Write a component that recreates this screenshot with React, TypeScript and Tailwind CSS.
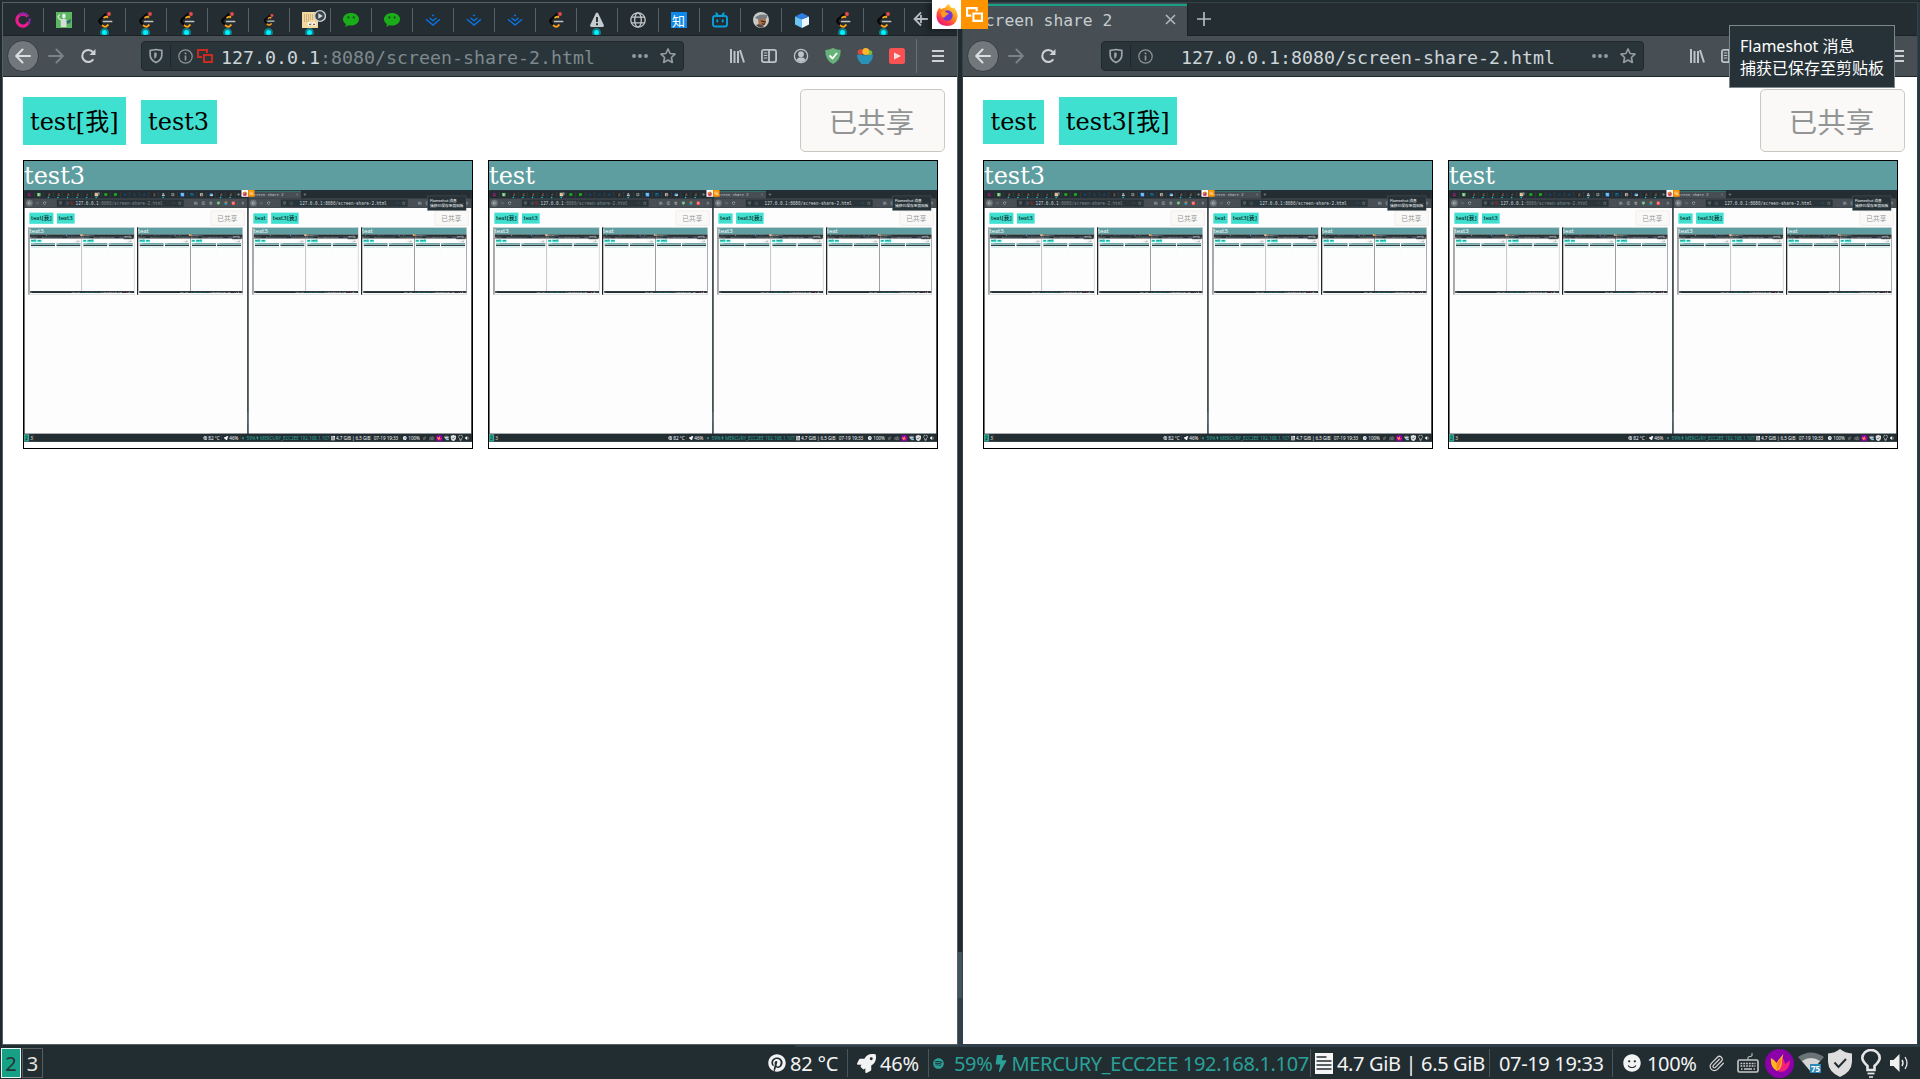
import React from "react";
import { FaPinterest, FaRocket, FaSpotify, FaBolt, FaSmile } from "react-icons/fa";
import { Paperclip } from "lucide-react";

const MONO = "font-['DejaVu_Sans_Mono',monospace]";
const SERIF = "font-['DejaVu_Serif','Noto_Sans_CJK_SC',serif]";
const SANS = "font-['Noto_Sans','Noto_Sans_CJK_SC',sans-serif]";

type TabKind =
  | "swirl" | "robot" | "leet" | "leetSmall" | "page" | "wechat" | "juejin" | "warn"
  | "globe" | "zhihu" | "bili" | "avatar" | "cube";

const tabs: { kind: TabKind; dot?: boolean }[] = [
  { kind: "swirl" }, { kind: "robot" },
  { kind: "leet", dot: true }, { kind: "leet", dot: true }, { kind: "leet", dot: true }, { kind: "leet", dot: true },
  { kind: "leetSmall", dot: true }, { kind: "page", dot: true },
  { kind: "wechat" }, { kind: "wechat" },
  { kind: "juejin" }, { kind: "juejin" }, { kind: "juejin" },
  { kind: "leet" }, { kind: "warn", dot: true }, { kind: "globe" }, { kind: "zhihu" }, { kind: "bili" },
  { kind: "avatar" }, { kind: "cube" }, { kind: "leet", dot: true }, { kind: "leet", dot: true },
];

function Leet({ size = 16 }: { size?: number }) {
  return (
    <svg width={size} height={size} viewBox="0 0 16 16" fill="none" strokeWidth="2.2">
      <path d="M8.6 2.4 2.8 7.600Q1.400 9 2.800 10.400L5.400 13" stroke="#070707" strokeLinecap="round" />
      <path d="M6.500 6 8.600 4.800q1.200-.4 2.400.8" stroke="#ffa116" strokeWidth="1.900" />
      <path d="M4.900 13 7 14.500q1.600.8 3-.6L11.400 12.500" stroke="#ffa116" strokeWidth="1.900" />
      <path d="M6.600 9.500h8" stroke="#c4c4c4" strokeLinecap="round" strokeWidth="1.700" />
      <circle cx="12" cy="2" r="1.900" fill="#e94b4b" />
    </svg>
  );
}

function TabIcon({ kind }: { kind: TabKind }) {
  switch (kind) {
    case "swirl":
      return (
        <svg width="16" height="16" viewBox="0 0 16 16" fill="none">
          <path d="M12.800 4.600A6 6 0 1 0 13.600 10" stroke="#e91e8c" strokeWidth="3.200" />
          <path d="M4 3.400Q9-1 13 4.500M14.600 6.500q.6 3-1.400 5.500" stroke="#8e24aa" strokeWidth="2" />
          <path d="M2 10q3 6 9.500 3.600" stroke="#f0189a" strokeWidth="1.600" />
        </svg>
      );
    case "robot":
      return (
        <svg width="16" height="16" viewBox="0 0 16 16">
          <rect width="16" height="16" fill="#5cb860" />
          <path d="M1.200 4.500 3.500 2l.7 1-1.500 2 2.300 2.200 3-.4 2.500.7V15H4.800V8.800L2.500 7Z" fill="#d5ded6" />
          <ellipse cx="7.900" cy="3.900" rx="1.800" ry="2.500" fill="#e9eeea" />
          <path d="m10.500 9 4.500-2-.8 4-3 1Z" fill="#2e6b72" />
        </svg>
      );
    case "leet":
      return <Leet />;
    case "leetSmall":
      return <Leet size={12} />;
    case "page":
      return (
        <svg width="24" height="20" viewBox="0 0 24 20" className="mb-1 ml-2">
          <rect x="0" y="4" width="16" height="16" fill="#f3d9a0" />
          <path d="M2 7h9M2 9h9M2 11h9M2 13h6" stroke="#a68a5a" strokeDasharray="1 1" />
          <circle cx="7.500" cy="16" r="1.900" fill="#fff" /><circle cx="12" cy="16" r="1.900" fill="#fff" />
          <circle cx="8" cy="16.400" r=".8" fill="#333" /><circle cx="12" cy="16.400" r=".8" fill="#333" />
          <circle cx="18" cy="8" r="5.400" fill="#3a444a" stroke="#c9ced1" strokeWidth="1.400" />
          <path d="m16.300 5.200 4.500 2.800-4.500 2.800Z" fill="#d5d9db" />
        </svg>
      );
    case "wechat":
      return (
        <svg width="16" height="16" viewBox="0 0 16 16">
          <path d="M8 1C3.500 1 0 3.700 0 7.200c0 2 1.100 3.700 3 4.900L2.200 15l3.200-1.800c.8.2 1.700.3 2.600.3 4.500 0 8-2.800 8-6.300S12.500 1 8 1Z" fill="#1aad19" />
          <circle cx="5.400" cy="5.400" r="1.100" fill="#14501a" /><circle cx="10.700" cy="5.400" r="1.100" fill="#14501a" />
        </svg>
      );
    case "juejin":
      return (
        <svg width="16" height="16" viewBox="0 0 16 16" fill="none" stroke="#0a75e8" strokeWidth="1.400">
          <path d="m1 7.200 7 5.800 7-5.800M4.500 6 8 8.700 11.500 6" />
          <path d="m8 2.200 1.400 1.200L8 4.600 6.600 3.400Z" fill="#0a75e8" stroke="none" />
        </svg>
      );
    case "warn":
      return (
        <svg width="16" height="16" viewBox="0 0 16 16">
          <path d="M6.700 1.500q1.300-1.800 2.600 0l5.400 11.300q.6 2-1.300 2.200H2.600Q.7 14.800 1.300 12.800Z" fill="#c6cbce" />
          <path d="M8 5v5M8 11.300v1.900" stroke="#232d32" strokeWidth="1.900" />
        </svg>
      );
    case "globe":
      return (
        <svg width="16" height="16" viewBox="0 0 16 16" fill="none" stroke="#c3c8ca" strokeWidth="1.300">
          <circle cx="8" cy="8" r="7.200" /><ellipse cx="8" cy="8" rx="3.300" ry="7.200" /><path d="M1.500 5.200h13M1.500 10.800h13" />
        </svg>
      );
    case "zhihu":
      return <span className="flex h-4 w-4 items-center justify-center bg-[#0f88eb] text-[13px] leading-none text-white font-['Noto_Sans_CJK_SC',sans-serif]">知</span>;
    case "bili":
      return (
        <svg width="16" height="16" viewBox="0 0 16 16" fill="none" stroke="#0a9fdc" strokeWidth="1.900" strokeLinecap="round">
          <rect x="1" y="4" width="14" height="10.500" rx="2" /><path d="M4.300 1.300 6 3.300M11.700 1.300 10 3.300M5.300 8.300v1.200M10.700 8.300v1.200" />
        </svg>
      );
    case "avatar":
      return (
        <svg width="16" height="16" viewBox="0 0 16 16">
          <circle cx="8" cy="8" r="8" fill="#c9c9c6" />
          <path d="M5 6h8l-.5 6L9 15.500 5.500 13Z" fill="#a9714a" />
          <path d="M2 6q4-5 12-3v3L6 7.500Z" fill="#777d82" /><path d="m8 9 5 1M9 12h3" stroke="#2c1c14" />
          <path d="M3 13q5-2 8 2.300Q6 17 3 13Z" fill="#4b4a48" />
        </svg>
      );
    case "cube":
      return (
        <svg width="16" height="16" viewBox="0 0 16 16">
          <path d="m1 4.500 7 2.800V16l-7-3.600Z" fill="#6cc4f5" /><path d="m15 4.500-7 2.800V16l7-3.600Z" fill="#e9f6ff" /><path d="m8 1 7 3.500-7 2.800-7-2.800Z" fill="#2d7ee0" />
        </svg>
      );
  }
}

function ShareGlyph({ color, size }: { color: string; size: number }) {
  return (
    <svg width={size} height={size} viewBox="0 0 16 14" fill="none" stroke={color} strokeWidth="2">
      <path d="M5 8H1V1h9v3" /><path d="M7 6h8v7H7Z" />
    </svg>
  );
}

function PinnedTabs() {
  return (
    <div className="flex h-full">
      {tabs.map((t, i) => (
        <div key={i} className="relative flex h-[32px] w-[41px] shrink-0 items-center justify-center pr-[2px] pt-[2px]">
          <TabIcon kind={t.kind} />
          {t.dot && (
            <span className="absolute bottom-0 left-[15px] h-[7px] w-[9px] overflow-hidden">
              <span className="block h-[9px] w-[9px] rounded-full border-2 border-[#127f86] bg-[#00f0ff]" />
            </span>
          )}
          <span className="absolute right-0 top-[5px] h-6 w-px bg-[#566065]" />
        </div>
      ))}
      <svg width="16" height="16" viewBox="0 0 16 16" className="ml-[8px] mt-2" fill="none" stroke="#b6bdc0" strokeWidth="1.800">
        <path d="M15 8H2M8 1.500 1.500 8 8 14.500M8 4v8" />
      </svg>
    </div>
  );
}

function ActiveTab() {
  return (
    <div className="flex h-full">
      <div className="relative flex h-[33px] w-[225px] items-center border-r border-[#1a2226] bg-[#474f55] pl-3">
        <span className="absolute inset-x-0 top-[1px] h-[2px] bg-[#16a085]" />
        <span className={`${MONO} w-[187px] whitespace-pre pt-[3px] text-[16.300px] leading-5 text-[#c6cdd0]`}>Screen share 2</span>
        <svg width="11" height="11" viewBox="0 0 11 11" className="ml-[3px]" stroke="#b3babd" strokeWidth="1.500"><path d="m1 1 9 9M10 1l-9 9" /></svg>
      </div>
      <svg width="14" height="14" viewBox="0 0 14 14" className="ml-[9px] mt-[9px]" stroke="#b3babd" strokeWidth="1.700"><path d="M7 0v14M0 7h14" /></svg>
    </div>
  );
}

function Toolbar({ own }: { own: boolean }) {
  return (
    <div className="flex h-[41px] items-center border-b border-[#1d272b] bg-[#474f55]">
      <div className="ml-[4px] flex h-8 w-8 shrink-0 items-center justify-center rounded-full border border-[#343d42] bg-[#71777b]">
        <svg width="16" height="16" viewBox="0 0 16 16" fill="none" stroke="#dbdfe0" strokeWidth="2" strokeLinecap="round" strokeLinejoin="round"><path d="M15 8H1.500M7.500 1.500 1.200 8l6.300 6.500" /></svg>
      </div>
      <svg width="16" height="16" viewBox="0 0 16 16" className="ml-[9px]" fill="none" stroke="#7b8388" strokeWidth="2" strokeLinecap="round" strokeLinejoin="round"><path d="M1 8h13.500M8.500 1.500 14.800 8l-6.300 6.500" /></svg>
      <svg width="16" height="16" viewBox="0 0 16 16" className="ml-[16px]" fill="none" stroke="#ccd1d3" strokeWidth="2.100"><path d="M13.300 11.200A6 6 0 1 1 12.800 4L14 5.300" /><path d="M15.500 1v6H9.400Z" fill="#ccd1d3" stroke="none" /></svg>
      <div className="ml-[45px] flex h-[30px] w-[543px] items-center rounded border border-[#20292d] bg-[#2a353b]">
        <svg width="14" height="16" viewBox="0 0 14 16" className="ml-[7px]" fill="none" stroke="#9da5a8" strokeWidth="1.700"><path d="M7 1.500 12.800 2.400V7c0 3.500-2.500 6-5.800 7.600C3.700 13 1.200 10.500 1.200 7V2.400Z" /><path d="M5.200 4.500v6.300C7.200 10 7.700 8.500 7.700 7V4.800Z" fill="#9da5a8" stroke="none" /></svg>
        <span className="ml-[7px] h-[22px] w-px bg-[#1d262b]" />
        <svg width="15" height="15" viewBox="0 0 15 15" className="ml-[7px]" fill="none" stroke="#8d969a"><circle cx="7.500" cy="7.500" r="6.700" strokeWidth="1.200" /><path d="M7.500 6.500v5M7.500 3.500v1.700" strokeWidth="1.700" /></svg>
        <div className="ml-[4px] w-4">{own && <ShareGlyph color="#cb2a1e" size={16} />}</div>
        <div className={`${MONO} ml-[8px] w-[411px] whitespace-pre pt-[4px] text-[18.280px] leading-6 text-[#ced5d8]`}>
          127.0.0.1<span className={own ? "text-[#7f898d]" : ""}>:8080/screen-share-2.html</span>
        </div>
        <svg width="16" height="4" viewBox="0 0 16 4" fill="#929a9e"><circle cx="2" cy="2" r="2" /><circle cx="8" cy="2" r="2" /><circle cx="14" cy="2" r="2" /></svg>
        <svg width="16" height="16" viewBox="0 0 16 16" className="ml-[12px]" fill="none" stroke="#939b9f" strokeWidth="1.700" strokeLinejoin="round"><path d="m8 1 2.100 4.500 4.900.6-3.600 3.400.9 4.900L8 12l-4.300 2.400.9-4.900L1 6.100l4.900-.6Z" /></svg>
      </div>
      <svg width="16" height="16" viewBox="0 0 16 16" className="ml-[45px]" stroke="#bdc4c7" strokeWidth="2"><path d="M2 1v14M5.500 3v12M9 3v12" /><path d="m11 2 4 12.500" /></svg>
      <svg width="16" height="16" viewBox="0 0 16 16" className="ml-[16px]" fill="none" stroke="#bdc4c7" strokeWidth="1.800"><rect x=".9" y="1.900" width="14.200" height="12.200" rx="2" /><path d="M8 2v12" /><path d="M2.800 5h3.500M2.800 7.500h3.500M2.800 10h3.500" strokeWidth="1.100" /></svg>
      <svg width="16" height="16" viewBox="0 0 16 16" className="ml-[16px]" fill="#bdc4c7"><circle cx="8" cy="8" r="6.600" fill="none" stroke="#bdc4c7" strokeWidth="1.300" /><circle cx="8" cy="6.200" r="2.900" /><path d="M3.500 12q1-3 4.500-2.600Q11.500 9 12.500 12 8 16 3.500 12Z" /></svg>
      <svg width="16" height="16" viewBox="0 0 16 16" className="ml-[16px]"><path d="M8 0q4 2 7.700 2Q16 12 8 16 0 12 .3 2 4 2 8 0Z" fill="#67b279" /><path d="m4.500 7.500 3 3L12 5" fill="none" stroke="#fff" strokeWidth="1.800" /></svg>
      <svg width="16" height="16" viewBox="0 0 16 16" className="ml-[16px]"><circle cx="3.500" cy="4" r="2.800" fill="#dd4a3c" /><circle cx="12.800" cy="4.800" r="2.500" fill="#79b943" /><circle cx="8.800" cy="3.500" r="3.500" fill="#fbb829" /><path d="M0 6.500q8 1.500 16 0 0 5-3.500 8l-1 1.500h-7l-1-1.500Q0 11.500 0 6.500Z" fill="#2a92b8" /></svg>
      <svg width="16" height="16" viewBox="0 0 16 16" className="ml-[16px]"><rect width="16" height="16" rx="2.500" fill="#fa5252" /><path d="m5 4.500 7 3.500-7 3.500Z" fill="#f9dede" /></svg>
      <span className="ml-[11px] h-[34px] w-px bg-[#697176]" />
      <svg width="12" height="12" viewBox="0 0 12 12" className="ml-[15px]" stroke="#ccd1d3" strokeWidth="2"><path d="M0 1h12M0 6h12M0 11h12" /></svg>
    </div>
  );
}

/* Innermost share level: only the coarse bands of the screen remain visible. */
function CoarseScreen() {
  return (
    <div className="h-[252px] w-[448px] bg-[#fcfefd]">
      <div className="h-[27px] bg-[#2f3e42]" />
      <div className="h-[14px] bg-[#e2f6f3]" />
      <div className="flex h-[10px] gap-2 px-1"><div className="flex-1 bg-[#b5d6d4]" /><div className="flex-1 bg-[#b5d6d4]" /></div>
    </div>
  );
}

const cardBorder = [
  "border-black",
  "border-[#8a8f8f] border-l-black shadow-[-3px_0_0_#000]",
  "border-[#dfe4e4]",
];

function SharedScreen({ name, depth }: { name: string; depth: number }) {
  return (
    <div className={`h-[289px] w-[450px] shrink-0 overflow-hidden border ${cardBorder[depth]}`}>
      <div className={`${SERIF} h-[29px] bg-[#5f9ea0] text-2xl leading-[31px] text-white`}>{name}</div>
      <div className="h-[252px] w-[448px] overflow-hidden">
        {depth >= 2 ? (
          <CoarseScreen />
        ) : (
          <div className="h-[1079px] w-[1920px] origin-top-left scale-[0.23333]">
            <Desktop depth={depth + 1} faint={depth === 1 && name === "test3"} />
          </div>
        )}
      </div>
    </div>
  );
}

function UserTag({ label, me }: { label: string; me?: boolean }) {
  return (
    <span className={`${SERIF} block whitespace-nowrap bg-[#40e0d0] text-2xl text-black ${me ? "h-12 px-[7px] leading-[50px]" : "mt-[3px] h-11 px-[7.500px] leading-[45px]"}`}>
      {label}
    </span>
  );
}

function BrowserWindow({ left, depth, faint }: { left: boolean; depth: number; faint?: boolean }) {
  return (
    <div className={`flex h-[1043px] w-[956px] shrink-0 flex-col border ${faint ? "border-[#f4f6f6]" : left ? "border-[#566166]" : "border-[#344148]"}`}>
      <div className="h-[33px] border-b border-[#1a2226] bg-[#232d32]">{left ? <PinnedTabs /> : <ActiveTab />}</div>
      <Toolbar own={left} />
      <div className={`flex-1 px-5 pt-3 ${depth > 0 ? "bg-[#fdfdfd]" : "bg-white"}`}>
        <div className="flex h-[63px] items-start justify-between">
          <div className="flex gap-[15px] pt-2">
            {left ? (<><UserTag label="test[我]" me /><UserTag label="test3" /></>) : (<><UserTag label="test" /><UserTag label="test3[我]" me /></>)}
          </div>
          <div className="-mr-[8px] flex h-[63px] w-[145px] items-center justify-center rounded-[5px] border border-[#cdc7c2] bg-[#faf9f8] pr-[2px] pt-[2px] text-[28.500px] text-[#929595] font-['Noto_Sans_CJK_SC',sans-serif]">
            <span className="leading-none">已共享</span>
          </div>
        </div>
        <div className="mt-2 flex gap-[15px]">
          <SharedScreen name="test3" depth={depth} />
          <SharedScreen name="test" depth={depth} />
        </div>
      </div>
    </div>
  );
}

function Sep() {
  return <span className="h-7 w-px shrink-0 bg-[#4b5458]" />;
}

function Taskbar({ depth }: { depth: number }) {
  return (
    <div className={`${SANS} flex h-8 items-center whitespace-pre bg-[#222d32] text-[20px] leading-8 text-[#f3f3f3]`}>
      <div className="ml-[1px] flex h-[30px] w-5 items-center justify-center border border-[#e8f5f2] bg-[#16a085] pt-[2px] text-[#263238]">2</div>
      <div className="ml-[1px] flex h-[30px] w-[21px] items-center justify-center border border-[#5b5b5b] pt-[2px] text-[#e8e4dc]">3</div>
      <div className="ml-[725px] flex w-[79px] shrink-0 items-center gap-[4px] tracking-[-0.200px]"><FaPinterest size={18} /><span className="pt-[2px]">82 °C</span></div>
      <Sep />
      <div className="flex w-[80px] shrink-0 items-center gap-1 pl-[9px] tracking-[-0.200px]"><FaRocket size={19} /><span className="pt-[2px]">46%</span></div>
      <Sep />
      <div className="flex w-[381px] shrink-0 items-center pl-[4px] tracking-[-0.340px] text-[#2aa198]">
        <FaSpotify size={11} className="shrink-0" /><span className="ml-[10px] pt-[2px]">59%</span><FaBolt size={17} className="ml-[3px] w-3 shrink-0" />
        <span className="ml-[4px] pt-[2px]">MERCURY_ECC2EE 192.168.1.107</span>
      </div>
      <Sep />
      <div className="flex w-[178px] shrink-0 items-center pl-[4px] tracking-[-0.350px]">
        <svg width="18" height="21" viewBox="0 0 18 21" className="shrink-0"><path d="M0 0h18v21H0Z" fill="#f5f5f5" /><path d="M1.500 4h10M1.500 8h15M1.500 12h15M1.500 16h15" stroke="#222d32" strokeWidth="1.700" /></svg>
        <span className="ml-[4px] pt-[2px]">4.7 GiB | 6.5 GiB</span>
      </div>
      <Sep />
      <div className="w-[122px] shrink-0 pl-[9px] pt-[2px] tracking-[-0.350px]">07-19 19:33</div>
      <Sep />
      <div className="flex w-[95px] shrink-0 items-center gap-[6px] pl-[10px] tracking-[-0.350px]"><FaSmile size={18} /><span className="pt-[2px]">100%</span></div>
      <Paperclip size={17} strokeWidth={1.700} color="#d6d6d6" className="shrink-0" />
      <svg width="22" height="20" viewBox="0 0 22 20" className="ml-[12px]" fill="none" stroke="#c9c9c9"><rect x="1" y="7" width="20" height="12" rx="1.500" strokeWidth="1.600" /><path d="M11 7V4l4-1V0" /><path d="M3.500 10.500h15M3.500 13h15" strokeWidth="1.600" strokeDasharray="1.800 1" /><path d="M4 16h1.500M7 16h8M16.500 16H18" strokeWidth="1.600" /></svg>
      <svg width="29" height="29" viewBox="0 0 29 29" className="ml-[6px]"><circle cx="14.500" cy="14.500" r="14.500" fill="#8b00a8" /><path d="M14 21Q18 15 17 8q3 3 3 7 3-1.500 4.500-4 1 6-3 9.500-3 3-8 2Z" fill="#f5207e" /><path d="M6 9q4 2 5.500 5Q14 10 18.500 5q-2 6-1.500 9-.5 6-5 8-7-4-6-13Z" fill="#ffb51d" /><path d="M12 14q3-3 4-5 1 8-4 12-1-3 0-7Z" fill="#ff7a2a" /></svg>
      <svg width="26" height="24" viewBox="0 0 26 24" className="ml-[4px]"><path d="M0 6Q13-3 26 6L13 21Z" fill="#6c7377" /><path d="M4 10q9-6 18 0l-9 11Z" fill="#d5d5d5" /><rect x="12" y="13" width="11" height="9" fill="#2e88b8" />{depth < 2 && <text x="13" y="20.500" fontSize="8" fontWeight="700" fill="#fff" fontFamily="Noto Sans">75</text>}</svg>
      <svg width="24" height="28" viewBox="0 0 24 28" className="ml-[4px]"><path d="M12 0q5 4 12 4.500V13q-.5 10-12 15Q.5 23 0 13V4.500Q7 4 12 0Z" fill="#dedede" /><path d="m6.500 13.500 4 4.500 7.500-8" fill="none" stroke="#222d32" strokeWidth="2" /></svg>
      <svg width="20" height="29" viewBox="0 0 20 29" className="ml-[9px]" fill="none" stroke="#e6e6e6" strokeWidth="2.600"><path d="M6.500 21v-4Q1.300 12 1.300 9a8.700 8 0 0 1 17.400 0q0 3-5.200 8v4Z" /><path d="M6.500 24.500h7" strokeWidth="1.800" /><path d="M8 28h4" strokeWidth="1.500" /></svg>
      <svg width="20" height="18" viewBox="0 0 20 18" className="ml-[9px]" fill="none" stroke="#e9e9e9"><path d="M0 6h3.500L9.500 0v18l-6-6H0Z" fill="#f1f1f1" stroke="none" /><path d="M12 6q2 3 0 6" strokeWidth="1.500" /><path d="M15 3q4 6 0 12" strokeWidth="1.300" /></svg>
    </div>
  );
}

function FirefoxLogo() {
  return (
    <svg width="22" height="22" viewBox="0 0 22 22">
      <defs><linearGradient id="fx" x1=".85" y1=".05" x2=".2" y2="1"><stop offset="0" stopColor="#ffe040" /><stop offset=".45" stopColor="#ff8a16" /><stop offset=".75" stopColor="#ff3350" /><stop offset="1" stopColor="#e31587" /></linearGradient></defs>
      <path d="M2 5.500 4 3.200q.3 1.500 1 2Q7 4 9 3.700 10.500 1 13 0q.5 2.500 3 4.200L18 3.500Q22 8 21.500 13 20 22 11 22 1.500 21.500.5 13 .2 8.500 2 5.500Z" fill="url(#fx)" />
      <circle cx="11.500" cy="11.500" r="5.200" fill="#7138d8" /><path d="M5 8q4-2 5 .500 3 0 2.500 1.500-2.500 1-3 2.500Q7.500 15 5.500 12Z" fill="#ff9a20" />
    </svg>
  );
}

function Desktop({ depth, faint }: { depth: number; faint?: boolean }) {
  return (
    <div className="relative flex h-[1079px] w-[1920px] flex-col overflow-hidden bg-[#222d32]">
      <div className="flex h-[1045px] pt-[2px]">
        <div className="w-[2px] shrink-0 bg-[#1f2a2f]" />
        <BrowserWindow left depth={depth} faint={faint} />
        <div className="flex w-1 shrink-0 flex-col">
          <div className={`h-[950px] ${faint ? "bg-[#e9eded]" : "bg-[#212c31]"}`} />
          <div className={`h-[46px] ${faint ? "bg-[#e9eded]" : "bg-[#405560]"}`} />
          <div className={`flex-1 ${faint ? "bg-[#e9eded]" : "bg-[#2f404a]"}`} />
        </div>
        <BrowserWindow left={false} depth={depth} faint={faint} />
        <div className={`w-[2px] shrink-0 ${faint ? "bg-[#f4f6f6]" : "bg-[#28363e]"}`} />
      </div>
      <div className="flex h-[2px]"><div className="w-[795px]" /><div className="flex-1 bg-[#2f404a]" /></div>
      <Taskbar depth={depth} />
      <div className="absolute left-[932px] top-0 flex h-[29px]">
        <div className="flex w-[29px] items-center justify-center bg-white shadow-[-4px_2px_6px_rgba(0,0,0,0.35)]"><FirefoxLogo /></div>
        <div className="flex w-[27px] items-center justify-center bg-[#ff9400]"><ShareGlyph color="#ffffff" size={17} /></div>
      </div>
      <div className={`${SANS} absolute left-[1729px] top-[25px] h-[63px] w-[166px] whitespace-nowrap border border-[#7d888d] bg-[#263238] pl-[10px] pt-[9px] text-base leading-[22px] text-white`}>
        <div>Flameshot 消息</div>
        <div>捕获已保存至剪贴板</div>
      </div>
    </div>
  );
}

export default function App() {
  return <Desktop depth={0} />;
}
